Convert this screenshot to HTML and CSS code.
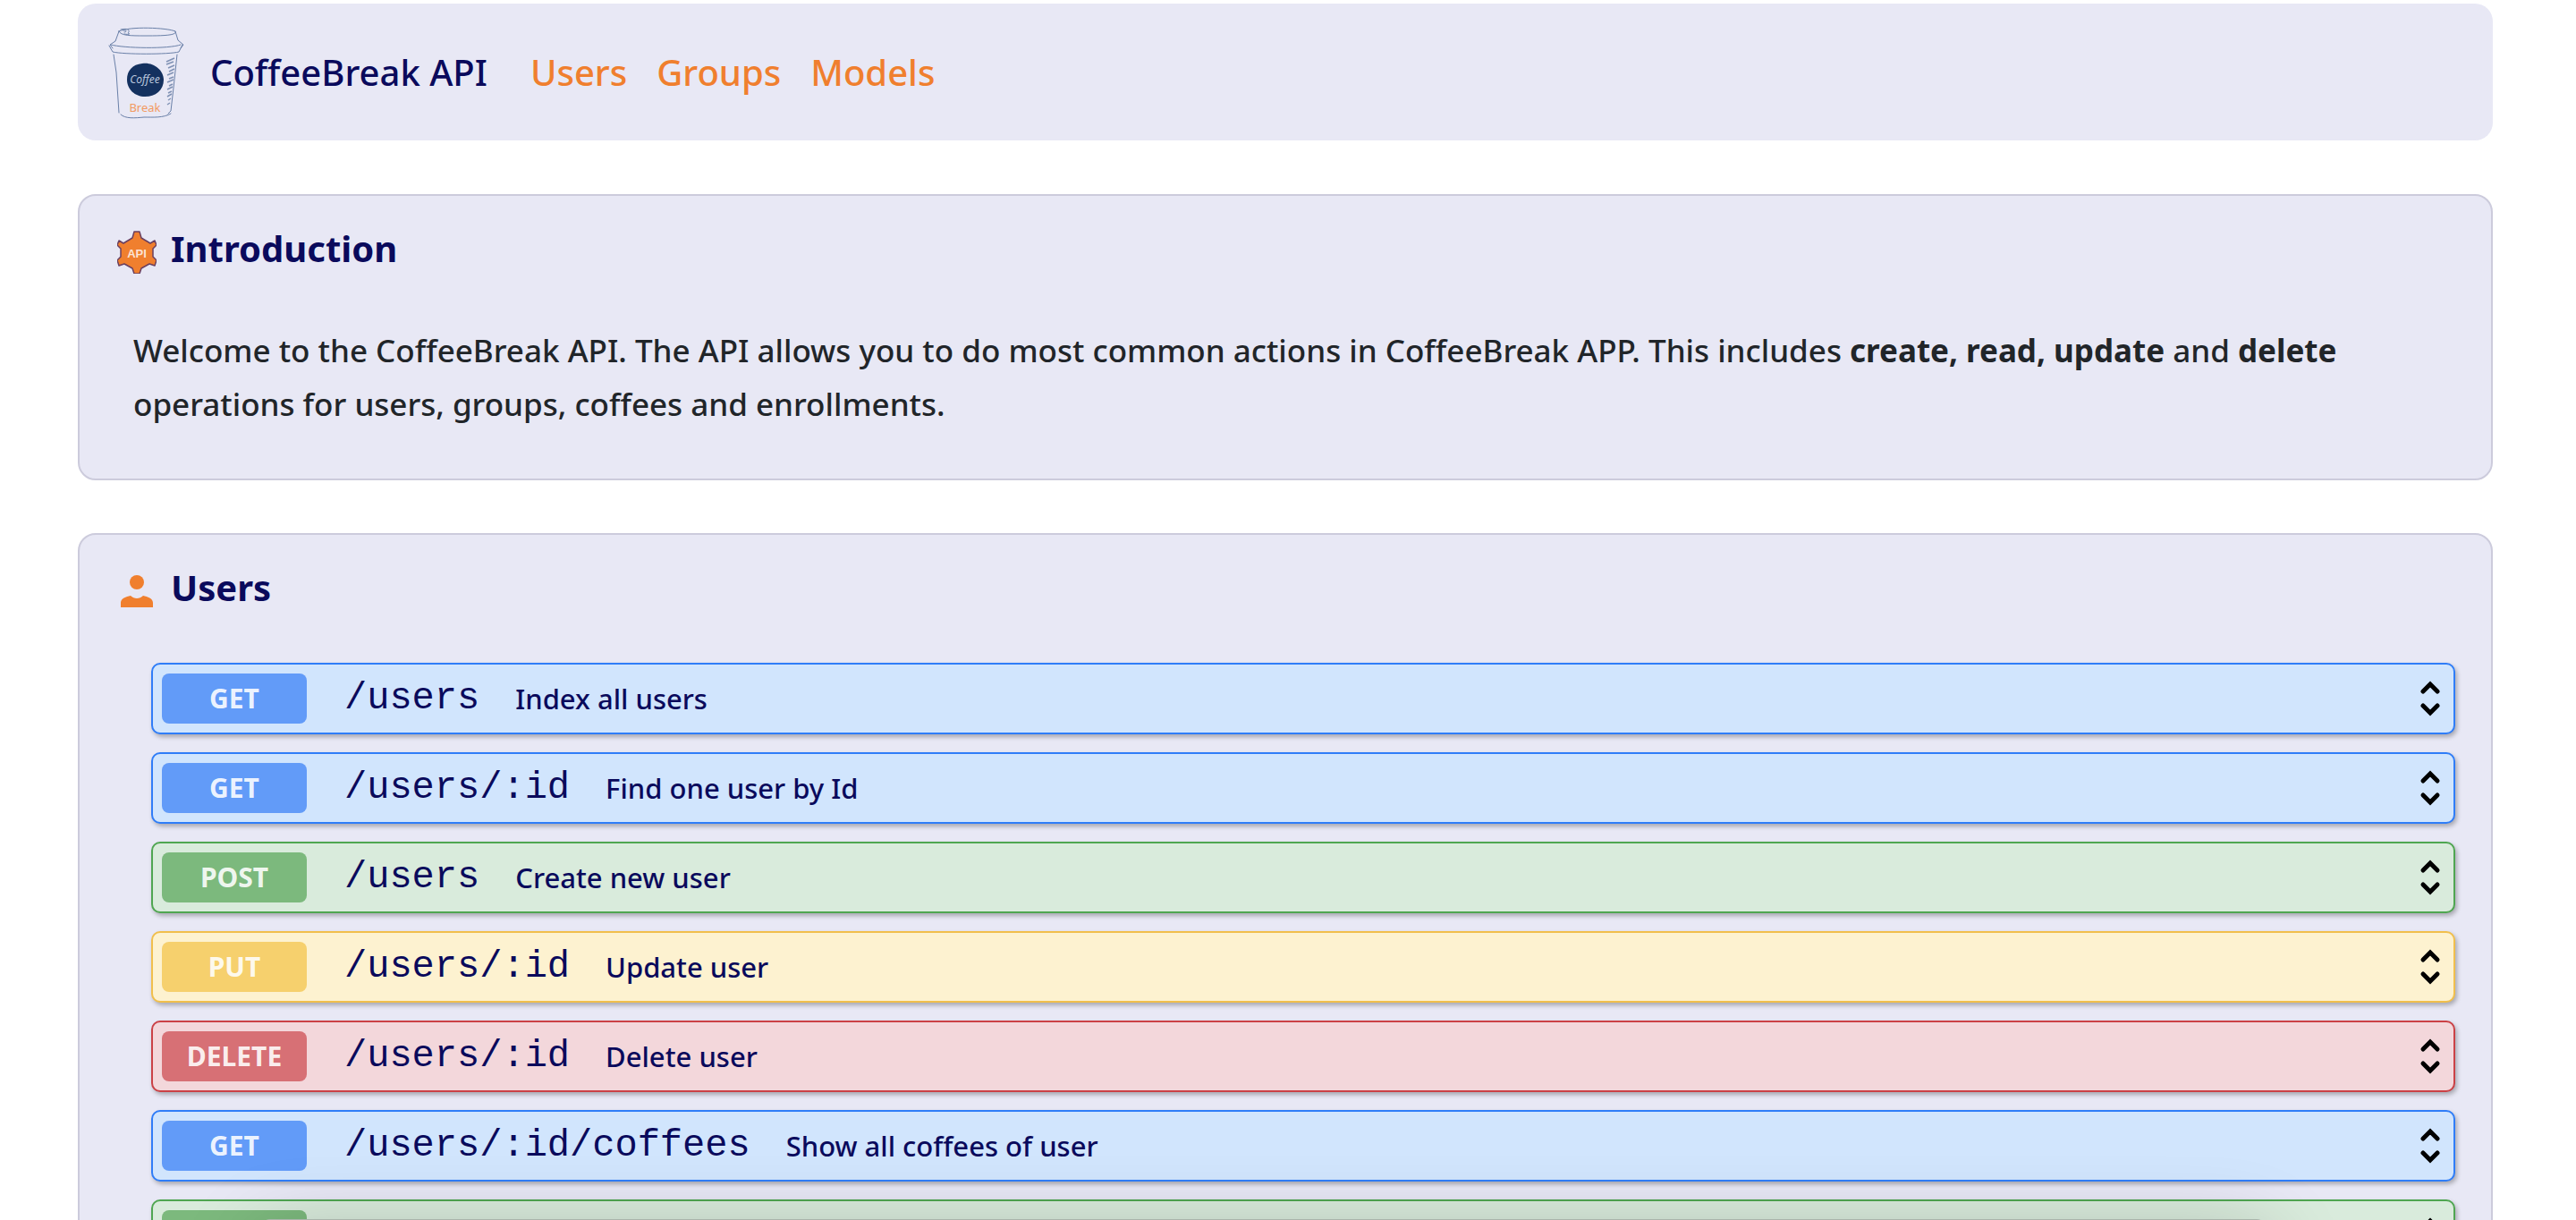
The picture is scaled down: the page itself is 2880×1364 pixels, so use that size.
FILE: index.html
```html
<!DOCTYPE html>
<html lang="en">
<head>
<meta charset="utf-8">
<title>CoffeeBreak API</title>
<link rel="stylesheet" href="styles.css">
</head>
<body>
<svg class="sprite" aria-hidden="true">
  <symbol id="chevrons" viewBox="0 0 24 44">
    <path d="M4 14 12 6l8 8M4 30l8 8 8-8" fill="none" stroke="#000" stroke-width="5" stroke-linecap="round"/>
  </symbol>
</svg>

<header class="navbar">
  <svg class="logo" viewBox="0 0 84 102" role="img" aria-label="CoffeeBreak logo">
    <g fill="none" stroke="#6a80a8" stroke-width="1" stroke-linecap="round" stroke-linejoin="round">
      <path d="M12 5C24-1 66 1 75 5c3 5-18 5-34 5C25 10 14 10 12 5Z"/>
      <path d="M14 3c8-2 11 1 8 4 4 1 0 2-4 1M17 4c4-1 4 2 1 2M12 5 8 16 2 20l3 4M75 5l3 10 6 5-3 4"/>
      <path d="M3 20c14 4 65 5 78 0M1 21l4 7c12 3 63 3 74 0l4-8"/>
      <path d="M6 31l3 20 3 45M77 31l-4 37-3 26-3 3M14 98c5 5 16 4 26 3 10 0 22 1 30-4"/>
    </g>
    <path d="M65 39l9-4M65 42l8-3M67 46l7-3M68 50l6-3M66 54l7-3M68 58l5-2M66 62l7-3M68 66l4-2M66 70l6-3M67 74l4-2M66 78l5-3M67 82l3-2M66 87l3-2" fill="none" stroke="#7f91b4" stroke-width="1.5"/>
    <path d="M38 41c12-2 24 7 24 18 0 12-9 19-21 19-11 0-20-8-20-19 0-10 6-17 17-18Z" fill="#14315f"/>
    <text x="41" y="63" class="logo-coffee">Coffee</text>
    <text x="41" y="95" class="logo-break">Break</text>
  </svg>
  <a class="brand" href="#introduction">CoffeeBreak API</a>
  <nav class="links" aria-label="Main">
    <a href="#users">Users</a>
    <a href="#groups">Groups</a>
    <a href="#models">Models</a>
  </nav>
</header>

<main class="content">
  <section class="card" id="introduction">
    <h2 class="title">
      <svg class="title-icon" viewBox="0 0 44 48" aria-hidden="true">
        <path d="M19 1h6l2 7 10 6 5-3 2 5-4 4v9l4 4-2 6-6-2-9 5-2 6h-6l-2-6-9-5-6 2-2-6 4-4v-9l-4-4 2-5 5 3 10-6Z" fill="#f07f2e" stroke="#6a4060" stroke-width="1.5" stroke-linejoin="round"/>
        <text x="22" y="30" class="icon-text">API</text>
      </svg>
      Introduction
    </h2>
    <p class="intro">Welcome to the CoffeeBreak API. The API allows you to do most common actions in CoffeeBreak APP. This includes <strong>create, read, update</strong> and <strong>delete</strong> operations for users, groups, coffees and enrollments.</p>
  </section>

  <section class="card" id="users">
    <h2 class="title">
      <svg class="title-icon" viewBox="0 0 44 48" aria-hidden="true">
        <circle cx="22" cy="14" r="8" fill="#f07f2e"/>
        <path d="M4 42v-5c0-5 6-7 11-8 4 4 10 4 14 0 5 1 11 3 11 8v5Z" fill="#f07f2e"/>
      </svg>
      Users
    </h2>
    <div class="routes">
      <button class="route get" type="button"><span class="verb">GET</span><code class="path">/users</code><span class="desc">Index all users</span><svg class="toggle" aria-hidden="true"><use href="#chevrons"/></svg></button>
      <button class="route get" type="button"><span class="verb">GET</span><code class="path">/users/:id</code><span class="desc">Find one user by Id</span><svg class="toggle" aria-hidden="true"><use href="#chevrons"/></svg></button>
      <button class="route post" type="button"><span class="verb">POST</span><code class="path">/users</code><span class="desc">Create new user</span><svg class="toggle" aria-hidden="true"><use href="#chevrons"/></svg></button>
      <button class="route put" type="button"><span class="verb">PUT</span><code class="path">/users/:id</code><span class="desc">Update user</span><svg class="toggle" aria-hidden="true"><use href="#chevrons"/></svg></button>
      <button class="route delete" type="button"><span class="verb">DELETE</span><code class="path">/users/:id</code><span class="desc">Delete user</span><svg class="toggle" aria-hidden="true"><use href="#chevrons"/></svg></button>
      <button class="route get" type="button"><span class="verb">GET</span><code class="path">/users/:id/coffees</code><span class="desc">Show all coffees of user</span><svg class="toggle" aria-hidden="true"><use href="#chevrons"/></svg></button>
      <button class="route post" type="button" aria-label="POST"><span class="verb"></span><svg class="toggle" aria-hidden="true"><use href="#chevrons"/></svg></button>
    </div>
  </section>
</main>
<div class="dock-shadow" aria-hidden="true"></div>
</body>
</html>
```
FILE: styles.css
```css
* { box-sizing: border-box; }

body {
  margin: 0;
  padding: 4px 93px 60px 87px;
  background: #fff;
  color: #212529;
  font-family: "Noto Sans", "Open Sans", sans-serif;
  font-weight: 500;
}

.sprite { display: none; }

.navbar {
  display: flex;
  align-items: center;
  height: 153px;
  padding: 0 34px;
  border-radius: 20px;
  background: #e8e8f5;
  font-size: 40px;
}

.logo { width: 84px; height: 102px; margin-right: 30px; overflow: visible; }
.logo-coffee { font: italic 12px "Noto Sans", sans-serif; fill: #b9c6dc; text-anchor: middle; }
.logo-break { font: 13px "Noto Sans", sans-serif; fill: #f29a62; text-anchor: middle; }

.brand { color: #0a0a5c; text-decoration: none; }

.links { display: flex; gap: 33px; margin-left: 48px; }
.links a { color: #f07f2e; text-decoration: none; }

.content { display: flex; flex-direction: column; gap: 59px; margin-top: 60px; }

.card {
  padding: 29px 40px 53px;
  border: 2px solid #cccbdc;
  border-radius: 20px;
  background: #e8e8f5;
}

.title {
  display: flex;
  align-items: center;
  gap: 16px;
  margin: 0 0 54px;
  padding-left: 2px;
  color: #0a0a5c;
  font-size: 40px;
  line-height: 60px;
}

.title-icon { width: 44px; height: 48px; margin-top: 8px; }
.icon-text { font: bold 13px "Liberation Sans", sans-serif; fill: #fbe3d3; text-anchor: middle; }

.intro { margin: 0; padding: 0 20px; font-size: 35px; line-height: 60px; }

.routes { display: flex; flex-direction: column; gap: 20px; padding-left: 40px; }

.route {
  display: flex;
  align-items: center;
  height: 80px;
  padding: 0 14px 0 10px;
  border: 2px solid;
  border-radius: 10px;
  box-shadow: 2px 3px 5px rgba(0, 0, 0, .28);
  color: #0a0a5c;
  font-family: inherit;
  font-weight: inherit;
  text-align: left;
}

.verb {
  width: 162px;
  height: 56px;
  margin-right: 42px;
  border-radius: 8px;
  color: rgba(255, 255, 255, .9);
  font-size: 30px;
  font-weight: 700;
  line-height: 56px;
  text-align: center;
}

.path { margin-right: 40px; font: 42px "Liberation Mono", monospace; }
.desc { font-size: 31px; }
.toggle { width: 24px; height: 44px; margin-left: auto; }

.get { border-color: #2f7df8; background: #d1e5fd; }
.get .verb { background: #629bf8; }
.post { border-color: #4fa651; background: #d9ebdc; }
.post .verb { background: #7cb97d; }
.put { border-color: #f1bf4c; background: #fdf2d0; }
.put .verb { background: #f6d06d; }
.delete { border-color: #cb4146; background: #f3d7db; }
.delete .verb { background: #d77075; }

/* Panel docked just under the fold; only its top edge and shadow reach the page. */
.dock-shadow {
  position: fixed;
  top: calc(100vh - 1px);
  left: 290px;
  right: 345px;
  height: 80px;
  border-radius: 12px;
  background: #a9b5ab;
  box-shadow: 0 20px 90px rgba(0, 0, 0, .24);
}
```
